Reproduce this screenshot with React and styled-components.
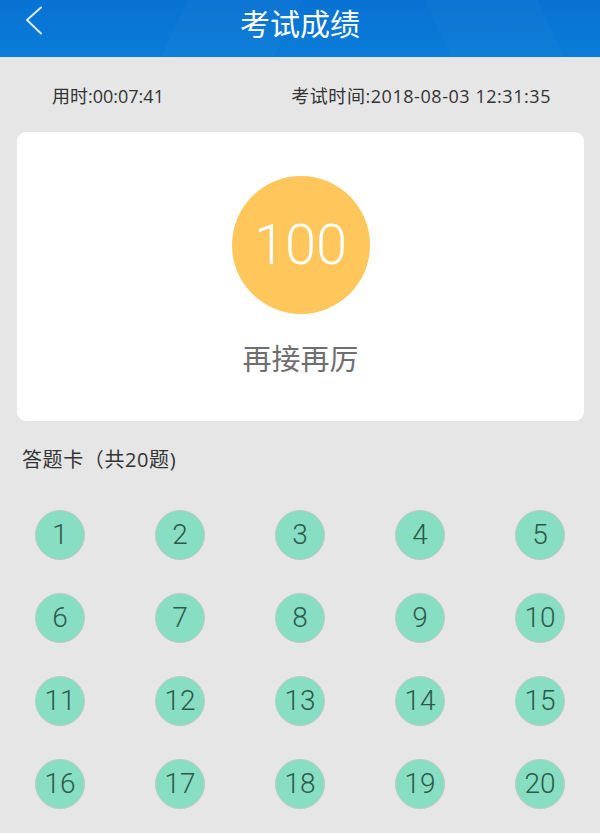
import React from 'react'
import styled, { createGlobalStyle } from 'styled-components'

const GlobalStyle = createGlobalStyle`
    html, body {
        margin: 0;
        padding: 0;
        background: #e6e6e6;
    }
    body {
        font-family: "Open Sans", "Noto Sans CJK SC", sans-serif;
        color: #333;
    }
`

const answers = Array.from({ length: 20 }, (_, i) => i + 1)

function App() {
    return (
        <>
            <GlobalStyle />
            <Page>
                <Header>
                    <BackButton aria-label="back">
                        <svg width="18" height="30" viewBox="0 0 18 30">
                            <polyline points="16,1.5 2,14 16,27.5" fill="none" stroke="#d6ebfc" strokeWidth="2" strokeLinecap="round" strokeLinejoin="round" />
                        </svg>
                    </BackButton>
                    <Title>考试成绩</Title>
                    <span />
                </Header>

                <InfoRow>
                    <span>用时:00:07:41</span>
                    <span>考试时间:2018-08-03 12:31:35</span>
                </InfoRow>

                <ScoreCard>
                    <ScoreCircle>100</ScoreCircle>
                    <Comment>再接再厉</Comment>
                </ScoreCard>

                <SectionTitle>答题卡（共20题)</SectionTitle>

                <AnswerGrid>
                    {answers.map(n => (
                        <AnswerCell key={n}>
                            <AnswerDot>{n}</AnswerDot>
                        </AnswerCell>
                    ))}
                </AnswerGrid>
            </Page>
        </>
    )
}

const Page = styled.div`
    width: 600px;
    min-height: 833px;
    background: #e6e6e6;
`

const Header = styled.header`
    height: 57px;
    display: grid;
    grid-template-columns: 80px 1fr 80px;
    align-items: center;
    background:
        linear-gradient(115deg, rgba(255,255,255,0) 0 30%, rgba(255,255,255,0.02) 30% 48%, rgba(255,255,255,0) 48%),
        linear-gradient(65deg, rgba(0,0,0,0) 0 72%, rgba(255,255,255,0.02) 72% 90%, rgba(0,0,0,0) 90%),
        linear-gradient(180deg, #0872d2 0%, #0a7cd8 100%);
`

const BackButton = styled.button`
    border: none;
    background: none;
    padding: 0 0 0 25px;
    height: 57px;
    display: flex;
    align-items: center;
    margin-top: -18px;
    cursor: pointer;
`

const Title = styled.h1`
    margin: 0 0 15px;
    text-align: center;
    font-size: 30px;
    font-weight: normal;
    color: #fff;
    font-family: "Noto Sans CJK SC", sans-serif;
`

const InfoRow = styled.div`
    height: 75px;
    display: flex;
    align-items: center;
    justify-content: space-between;
    padding: 0 49px 0 52px;
    font-size: 18px;
    color: #333;

    span + span {
        letter-spacing: 0.55px;
    }
`

const ScoreCard = styled.section`
    margin: 0 16px 0 17px;
    height: 289px;
    background: #fff;
    border-radius: 9px;
    display: flex;
    flex-direction: column;
    align-items: center;
    box-sizing: border-box;
    padding-top: 44px;
`

const ScoreCircle = styled.div`
    width: 138px;
    height: 138px;
    border-radius: 50%;
    background: #fec65b;
    color: #fff;
    display: flex;
    align-items: center;
    justify-content: center;
    font-family: "Roboto", "Liberation Sans", sans-serif;
    font-weight: 300;
    font-size: 56px;
`

const Comment = styled.p`
    margin: 24px 0 0;
    font-size: 29px;
    line-height: 38px;
    color: #6f6f6f;
    font-family: "Noto Sans CJK SC", sans-serif;
`

const SectionTitle = styled.h2`
    margin: 26px 0 0 22px;
    font-size: 20px;
    line-height: 26px;
    letter-spacing: 0.6px;
    font-weight: normal;
    color: #333;
`

const AnswerGrid = styled.div`
    margin-top: 20px;
    display: grid;
    grid-template-columns: repeat(5, 1fr);
    grid-auto-rows: 83px;
`

const AnswerCell = styled.div`
    display: flex;
    align-items: center;
    justify-content: center;
`

const AnswerDot = styled.div`
    width: 50px;
    height: 50px;
    box-sizing: border-box;
    border-radius: 50%;
    border: 1.5px solid #bfcac5;
    background: #88dec2;
    color: #2b5a4b;
    display: flex;
    align-items: center;
    justify-content: center;
    font-family: "Roboto", "Liberation Sans", sans-serif;
    font-weight: 300;
    font-size: 28px;
`

export default App
